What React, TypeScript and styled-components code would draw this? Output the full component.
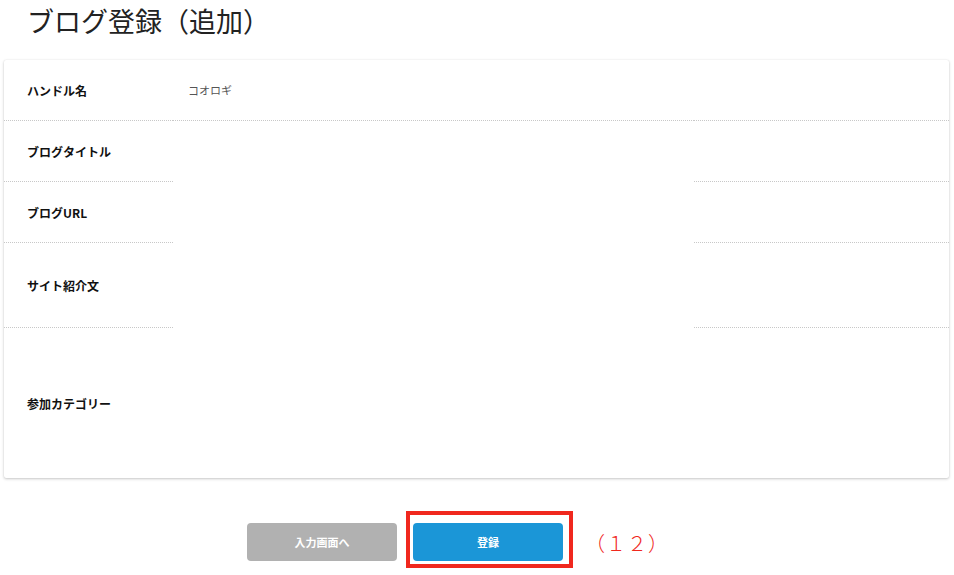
import styled, { createGlobalStyle } from 'styled-components';

const GlobalStyle = createGlobalStyle`
  html, body {
    margin: 0;
    padding: 0;
    background: #ffffff;
  }
  body {
    font-family: "Noto Sans CJK JP", "Noto Sans", sans-serif;
    color: #222222;
  }
`;

const Page = styled.div`
  width: 954px;
  min-height: 575px;
  padding: 0 5px 0 4px;
  box-sizing: border-box;
`;

const Title = styled.h1`
  margin: 0;
  height: 60px;
  padding: 2px 0 0 23px;
  box-sizing: border-box;
  font-size: 27px;
  line-height: 38px;
  font-weight: 400;
  color: #222222;
`;

const Card = styled.section`
  background: #ffffff;
  border-radius: 2px;
  box-shadow: 0 1px 3px rgba(0, 0, 0, 0.22), 0 0 1px rgba(0, 0, 0, 0.12);
  display: grid;
  grid-template-columns: 169px 521px 1fr;
`;

const Label = styled.div<{ $h: number; $last?: boolean }>`
  height: ${(p) => p.$h}px;
  box-sizing: border-box;
  display: flex;
  align-items: center;
  padding-left: 23px;
  font-size: 12px;
  font-weight: 700;
  color: #111111;
  border-bottom: ${(p) => (p.$last ? 'none' : '1px dotted #c8c8c8')};
`;

const Field = styled.div<{ $lined?: boolean }>`
  box-sizing: border-box;
  display: flex;
  align-items: center;
  padding-left: 15px;
  font-size: 11px;
  color: #555555;
  border-bottom: ${(p) => (p.$lined ? '1px dotted #c8c8c8' : 'none')};
`;

const Filler = styled.div<{ $last?: boolean }>`
  box-sizing: border-box;
  border-bottom: ${(p) => (p.$last ? 'none' : '1px dotted #c8c8c8')};
`;

const Actions = styled.div`
  display: flex;
  align-items: center;
  gap: 16px;
  padding: 45px 0 0 243px;
`;

const Marked = styled.span`
  position: relative;
  display: inline-flex;
`;

const Button = styled.button<{ $tone: 'gray' | 'blue' }>`
  width: 150px;
  height: 38px;
  border: none;
  border-radius: 4px;
  background: ${(p) => (p.$tone === 'blue' ? '#1b96d7' : '#b1b1b1')};
  color: #ffffff;
  font-family: "Noto Sans CJK JP", sans-serif;
  font-size: 11px;
  font-weight: 700;
  cursor: pointer;
`;

const Highlight = styled.span`
  position: absolute;
  top: -12px;
  left: -7px;
  right: -10px;
  bottom: -7px;
  border: 4px solid #f0281e;
  pointer-events: none;
`;

const Note = styled.span`
  margin-left: 6px;
  font-size: 20px;
  font-weight: 300;
  color: #f0281e;
  letter-spacing: 1px;
`;

const rows = [
  { label: 'ハンドル名', h: 61, value: 'コオロギ' },
  { label: 'ブログタイトル', h: 61 },
  { label: 'ブログURL', h: 61 },
  { label: 'サイト紹介文', h: 85 },
  { label: '参加カテゴリー', h: 150 },
];

export default function App() {
  return (
    <>
      <GlobalStyle />
      <Page>
        <Title>ブログ登録（追加）</Title>
        <Card>
          {rows.map((r, i) => {
            const last = i === rows.length - 1;
            return [
              <Label key={r.label} $h={r.h} $last={last}>
                {r.label}
              </Label>,
              <Field key={r.label + '-f'} $lined={i === 0}>
                {r.value}
              </Field>,
              <Filler key={r.label + '-x'} $last={last} />,
            ];
          })}
        </Card>
        <Actions>
          <Button $tone="gray">入力画面へ</Button>
          <Marked>
            <Button $tone="blue">登録</Button>
            <Highlight />
          </Marked>
          <Note>（１２）</Note>
        </Actions>
      </Page>
    </>
  );
}
